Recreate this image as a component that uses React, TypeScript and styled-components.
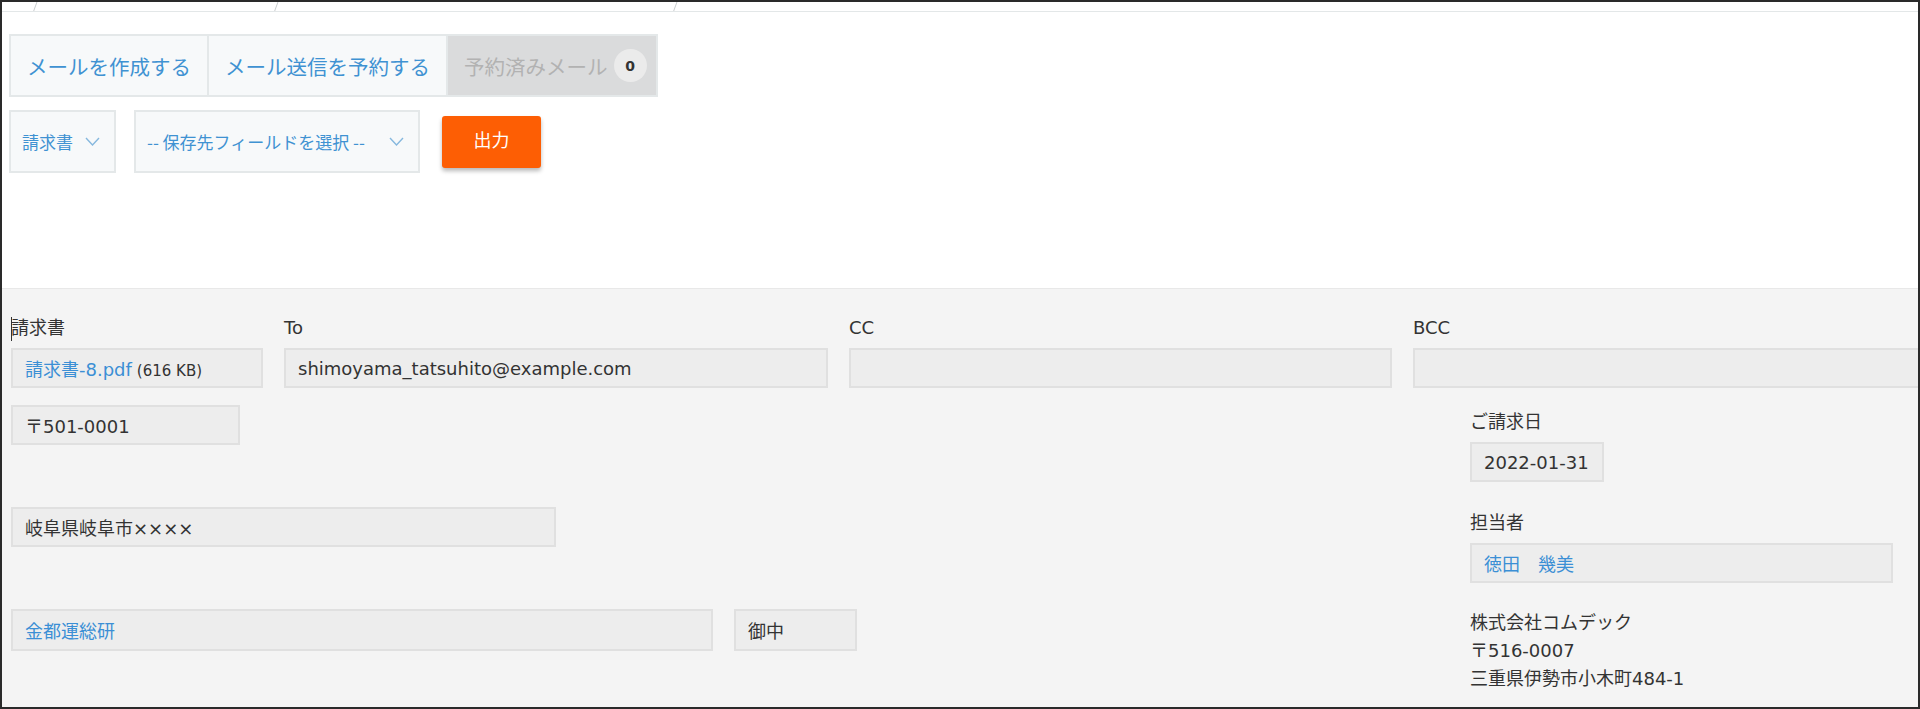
import * as React from 'react'
import styled, { createGlobalStyle } from 'styled-components'

const GlobalStyle = createGlobalStyle`
  html, body {
    margin: 0;
    padding: 0;
    background: #fff;
  }

  body {
    font-family: "DejaVu Sans", "Noto Sans CJK JP", sans-serif;
    color: #333;
  }
`

const Frame = styled.div`
  width: 1920px;
  height: 709px;
  box-sizing: border-box;
  border: 2px solid #2a2a2a;
  overflow: hidden;
  display: flex;
  flex-direction: column;
  background: #fff;
`

const Top = styled.div`
  height: 286px;
  flex-shrink: 0;
`

// Breadcrumb strip (cut off at the top of the shot)
const Crumbs = styled.div`
  display: flex;
  height: 9px;
  border-bottom: 1px solid #e3e7e8;
`

const Crumb = styled.div<{ $w: number }>`
  width: ${({ $w }) => $w}px;
  flex-shrink: 0;
  display: flex;
  justify-content: flex-end;
`

const Slash = styled.span`
  width: 1px;
  height: 10px;
  margin-top: -1px;
  background: #c9cdd0;
  transform: skewX(-20deg);
`

// Mail tabs
const Tabs = styled.div`
  display: flex;
  height: 63px;
  margin: 22px 0 0 7px;
`

const Tab = styled.div<{ $disabled?: boolean }>`
  display: flex;
  align-items: center;
  gap: 6px;
  padding: ${({ $disabled }) => ($disabled ? '0 9px 0 16px' : '0 16px')};
  box-sizing: border-box;
  border: 2px solid #e4e8e9;
  background: ${({ $disabled }) => ($disabled ? '#dadbdc' : '#f7f9fa')};
  color: ${({ $disabled }) => ($disabled ? '#b2b2b2' : '#3f92d2')};
  font-family: "Noto Sans CJK JP", sans-serif;
  font-size: 20.5px;
  white-space: nowrap;

  & + & {
    border-left: none;
  }
`

const Badge = styled.span`
  width: 33px;
  height: 33px;
  border-radius: 50%;
  background: #ebebeb;
  color: #333;
  font-family: "DejaVu Sans", sans-serif;
  font-size: 14px;
  font-weight: bold;
  display: flex;
  align-items: center;
  justify-content: center;
`

// Output toolbar
const Toolbar = styled.div`
  display: flex;
  align-items: center;
  gap: 18px;
  margin: 13px 0 0 7px;
`

const Select = styled.div<{ $w: number }>`
  width: ${({ $w }) => $w}px;
  height: 63px;
  box-sizing: border-box;
  border: 2px solid #e4e8e9;
  background: #f7f9fa;
  padding: 0 14px 0 11px;
  display: flex;
  align-items: center;
  justify-content: space-between;
  color: #3f92d2;
  font-family: "Noto Sans CJK JP", sans-serif;
  font-size: 17px;
  white-space: nowrap;
`

const OutputButton = styled.button`
  width: 99px;
  height: 52px;
  margin-left: 4px;
  border: none;
  border-radius: 3px;
  background: #fd5e04;
  color: #fff;
  font-family: "Noto Sans CJK JP", sans-serif;
  font-size: 18px;
  box-shadow: 0 3px 4px rgba(0, 0, 0, 0.28);
  padding: 0 0 6px;
`

// Print sheet
const Sheet = styled.div`
  flex: 1;
  background: #f4f4f4;
  border-top: 1px solid #e8e8e8;
  padding: 26px 0 0 9px;
`

const FieldRow = styled.div`
  display: flex;
  gap: 21px;
`

const Field = styled.div<{ $w: number }>`
  width: ${({ $w }) => $w}px;
  flex-shrink: 0;
  display: flex;
  flex-direction: column;
`

const Label = styled.div`
  height: 26px;
  line-height: 26px;
  margin-bottom: 7px;
  font-size: 18px;
  color: #333;
  white-space: nowrap;
`

const Caret = styled.span`
  display: inline-block;
  width: 1px;
  height: 24px;
  margin-right: -1px;
  vertical-align: middle;
  background: #333;
`

const Box = styled.div<{ $w?: number; $h?: number }>`
  width: ${({ $w }) => ($w ? `${$w}px` : 'auto')};
  height: ${({ $h }) => $h ?? 40}px;
  flex-shrink: 0;
  box-sizing: border-box;
  border: 2px solid #e0e0e0;
  background: #ededed;
  padding: 0 12px;
  display: flex;
  align-items: center;
  font-size: 18px;
  color: #333;
  white-space: nowrap;
  overflow: hidden;
`

const Link = styled.span`
  color: #3b8fd5;
`

const FileSize = styled.span`
  font-size: 15px;
  margin-left: 5px;
`

const Body = styled.div`
  display: grid;
  grid-template-columns: 1459px 1fr;
  margin-top: 17px;
`

const LeftCol = styled.div`
  display: flex;
  flex-direction: column;
  gap: 62px;
`

const NameRow = styled.div`
  display: flex;
  gap: 21px;
`

const RightCol = styled.div`
  display: flex;
  flex-direction: column;
  padding-top: 4px;
`

const Stack = styled.div<{ $top?: number }>`
  margin-top: ${({ $top }) => $top ?? 0}px;
`

const Company = styled.div`
  margin-top: 26px;
  font-size: 18px;
  line-height: 28px;
  color: #333;
`

const Chevron: React.FC = () => (
  <svg width="15" height="9" viewBox="0 0 15 9" fill="none">
    <polyline points="1,1 7.5,8 14,1" stroke="#86b8de" strokeWidth="1.4" />
  </svg>
)

const App: React.FC = () => {
  return (
    <>
      <GlobalStyle />
      <Frame>
        <Top>
          <Crumbs>
            <Crumb $w={34}><Slash /></Crumb>
            <Crumb $w={241}><Slash /></Crumb>
            <Crumb $w={399}><Slash /></Crumb>
          </Crumbs>

          <Tabs>
            <Tab>メールを作成する</Tab>
            <Tab>メール送信を予約する</Tab>
            <Tab $disabled>
              予約済みメール
              <Badge>0</Badge>
            </Tab>
          </Tabs>

          <Toolbar>
            <Select $w={107}>
              請求書
              <Chevron />
            </Select>
            <Select $w={286}>
              -- 保存先フィールドを選択 --
              <Chevron />
            </Select>
            <OutputButton>出力</OutputButton>
          </Toolbar>
        </Top>

        <Sheet>
          <FieldRow>
            <Field $w={252}>
              <Label><Caret />請求書</Label>
              <Box>
                <span>
                  <Link>請求書-8.pdf</Link>
                  <FileSize>(616 KB)</FileSize>
                </span>
              </Box>
            </Field>
            <Field $w={544}>
              <Label>To</Label>
              <Box>shimoyama_tatsuhito@example.com</Box>
            </Field>
            <Field $w={543}>
              <Label>CC</Label>
              <Box />
            </Field>
            <Field $w={544}>
              <Label>BCC</Label>
              <Box />
            </Field>
          </FieldRow>

          <Body>
            <LeftCol>
              <Box $w={229}>〒501-0001</Box>
              <Box $w={545}>岐阜県岐阜市××××</Box>
              <NameRow>
                <Box $w={702} $h={42}><Link>金都運総研</Link></Box>
                <Box $w={123} $h={42}>御中</Box>
              </NameRow>
            </LeftCol>

            <RightCol>
              <Stack>
                <Label>ご請求日</Label>
                <Box $w={134}>2022-01-31</Box>
              </Stack>
              <Stack $top={28}>
                <Label>担当者</Label>
                <Box $w={423}><Link>徳田　幾美</Link></Box>
              </Stack>
              <Company>
                <div>株式会社コムデック</div>
                <div>〒516-0007</div>
                <div>三重県伊勢市小木町484-1</div>
              </Company>
            </RightCol>
          </Body>
        </Sheet>
      </Frame>
    </>
  )
}

export default App
